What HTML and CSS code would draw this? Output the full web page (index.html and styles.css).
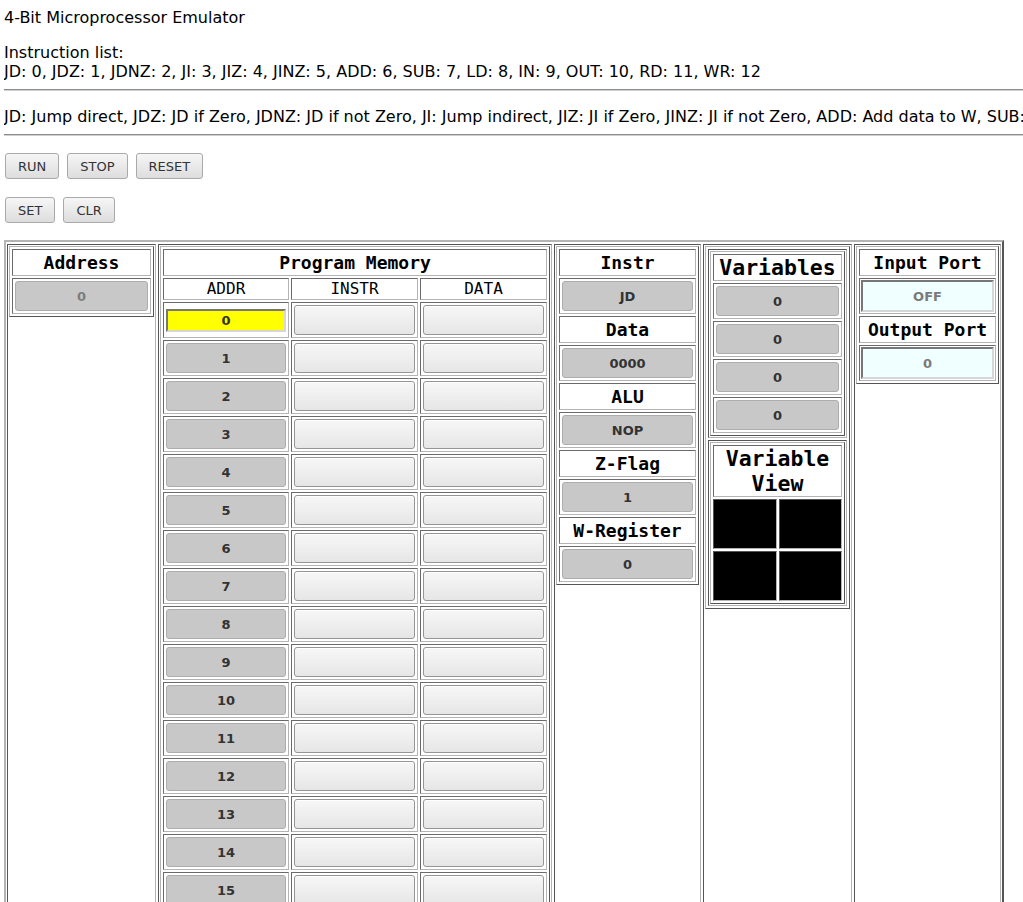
FILE: index.html
```html
<!DOCTYPE html>
<html lang="en">
<head>
<meta charset="utf-8">
<title>4-Bit Microprocessor Emulator</title>
<link rel="stylesheet" href="styles.css">
</head>
<body>
<div class="title">4-Bit Microprocessor Emulator</div>
<div class="list">Instruction list:<br>JD: 0, JDZ: 1, JDNZ: 2, JI: 3, JIZ: 4, JINZ: 5, ADD: 6, SUB: 7, LD: 8, IN: 9, OUT: 10, RD: 11, WR: 12</div>
<hr class="rule">
<div class="desc">JD: Jump direct, JDZ: JD if Zero, JDNZ: JD if not Zero, JI: Jump indirect, JIZ: JI if Zero, JINZ: JI if not Zero, ADD: Add data to W, SUB: Subtract data from W, LD: Load data to W, IN: Input port to W, OUT: W to Output port, RD: Read variable to W, WR: Write W to variable</div>
<hr class="rule">
<div class="controls first">
  <button class="ctl">RUN</button>
  <button class="ctl">STOP</button>
  <button class="ctl">RESET</button>
</div>
<div class="controls second">
  <button class="ctl">SET</button>
  <button class="ctl">CLR</button>
</div>

<div class="frame">
  <div class="col">
    <div class="panel w-addr">
      <div class="hd">Address</div>
      <div class="vc"><button class="vbtn dim">0</button></div>
    </div>
  </div>

  <div class="col">
    <div class="panel w-pm pm">
      <div class="hd span3">Program Memory</div>
      <div class="sh">ADDR</div>
      <div class="sh">INSTR</div>
      <div class="sh">DATA</div>
      <div class="vc mid"><input class="yin" type="text" value="0"></div>
      <div class="vc"><button class="ebtn"></button></div>
      <div class="vc"><button class="ebtn"></button></div>
      <div class="vc"><button class="vbtn">1</button></div><div class="vc"><button class="ebtn"></button></div><div class="vc"><button class="ebtn"></button></div>
      <div class="vc"><button class="vbtn">2</button></div><div class="vc"><button class="ebtn"></button></div><div class="vc"><button class="ebtn"></button></div>
      <div class="vc"><button class="vbtn">3</button></div><div class="vc"><button class="ebtn"></button></div><div class="vc"><button class="ebtn"></button></div>
      <div class="vc"><button class="vbtn">4</button></div><div class="vc"><button class="ebtn"></button></div><div class="vc"><button class="ebtn"></button></div>
      <div class="vc"><button class="vbtn">5</button></div><div class="vc"><button class="ebtn"></button></div><div class="vc"><button class="ebtn"></button></div>
      <div class="vc"><button class="vbtn">6</button></div><div class="vc"><button class="ebtn"></button></div><div class="vc"><button class="ebtn"></button></div>
      <div class="vc"><button class="vbtn">7</button></div><div class="vc"><button class="ebtn"></button></div><div class="vc"><button class="ebtn"></button></div>
      <div class="vc"><button class="vbtn">8</button></div><div class="vc"><button class="ebtn"></button></div><div class="vc"><button class="ebtn"></button></div>
      <div class="vc"><button class="vbtn">9</button></div><div class="vc"><button class="ebtn"></button></div><div class="vc"><button class="ebtn"></button></div>
      <div class="vc"><button class="vbtn">10</button></div><div class="vc"><button class="ebtn"></button></div><div class="vc"><button class="ebtn"></button></div>
      <div class="vc"><button class="vbtn">11</button></div><div class="vc"><button class="ebtn"></button></div><div class="vc"><button class="ebtn"></button></div>
      <div class="vc"><button class="vbtn">12</button></div><div class="vc"><button class="ebtn"></button></div><div class="vc"><button class="ebtn"></button></div>
      <div class="vc"><button class="vbtn">13</button></div><div class="vc"><button class="ebtn"></button></div><div class="vc"><button class="ebtn"></button></div>
      <div class="vc"><button class="vbtn">14</button></div><div class="vc"><button class="ebtn"></button></div><div class="vc"><button class="ebtn"></button></div>
      <div class="vc"><button class="vbtn">15</button></div><div class="vc"><button class="ebtn"></button></div><div class="vc"><button class="ebtn"></button></div>
    </div>
  </div>

  <div class="col">
    <div class="panel w-cpu">
      <div class="hd">Instr</div>
      <div class="vc"><button class="vbtn">JD</button></div>
      <div class="hd">Data</div>
      <div class="vc"><button class="vbtn">0000</button></div>
      <div class="hd">ALU</div>
      <div class="vc"><button class="vbtn">NOP</button></div>
      <div class="hd">Z-Flag</div>
      <div class="vc"><button class="vbtn">1</button></div>
      <div class="hd">W-Register</div>
      <div class="vc"><button class="vbtn">0</button></div>
    </div>
  </div>

  <div class="col">
    <div class="wrap">
      <div class="wcell">
        <div class="panel w-var">
          <div class="hd big">Variables</div>
          <div class="vc"><button class="vbtn">0</button></div>
          <div class="vc"><button class="vbtn">0</button></div>
          <div class="vc"><button class="vbtn">0</button></div>
          <div class="vc"><button class="vbtn">0</button></div>
        </div>
      </div>
      <div class="wcell">
        <div class="panel w-var">
          <div class="hd big">Variable<br>View</div>
          <div class="view">
            <div class="px"></div>
            <div class="px"></div>
            <div class="px"></div>
            <div class="px"></div>
          </div>
        </div>
      </div>
    </div>
  </div>

  <div class="col">
    <div class="panel w-io">
      <div class="hd">Input Port</div>
      <div class="vc tight"><input class="azin" type="text" value="OFF"></div>
      <div class="hd">Output Port</div>
      <div class="vc tight"><input class="azin" type="text" value="0"></div>
    </div>
  </div>
</div>
</body>
</html>
```

FILE: styles.css
```css
body {
  margin: 8px 0 0 4px;
  font-family: "DejaVu Sans", "Liberation Sans", sans-serif;
  font-size: 16px;
  line-height: 19px;
  color: #000;
  background: #fff;
}

.title {
  height: 19px;
}

.list {
  margin-top: 16px;
}

.rule {
  margin: 8px 0;
  border: 0;
  height: 0;
  border-top: 1px solid #8c8c8c;
  border-bottom: 1px solid #d0d0d0;
}

.desc {
  margin-top: 16px;
  white-space: nowrap;
  overflow: hidden;
}

.controls {
  display: flex;
  gap: 8px;
  padding-left: 1px;
  height: 26px;
}

.controls.first {
  margin-top: 17px;
}

.controls.second {
  margin-top: 18px;
}

.ctl {
  height: 26px;
  padding: 0 12px;
  border: 1px solid #a9a9a9;
  border-radius: 3px;
  background: linear-gradient(#f6f6f6, #dddddd);
  font-family: "DejaVu Sans", sans-serif;
  font-size: 13px;
  color: #333;
  margin: 0;
}

/* emulator frame */
.frame {
  margin-top: 17px;
  display: flex;
  align-items: stretch;
  gap: 2px;
  width: fit-content;
  border: 2px solid;
  border-color: #b4b4b4 #555 #555 #b4b4b4;
  padding: 2px 1px 2px 1px;
}

.col {
  border: 1px solid;
  border-color: #555 #b4b4b4 #b4b4b4 #555;
  padding: 1px;
}

.panel,
.wrap {
  border: 1px solid;
  border-color: #b4b4b4 #555 #555 #b4b4b4;
  padding: 2px;
  display: flex;
  flex-direction: column;
  gap: 2px;
}

.wrap {
  align-items: flex-start;
}

.wcell {
  border: 1px solid;
  border-color: #555 #b4b4b4 #b4b4b4 #555;
  padding: 1px;
}

.w-addr { width: 139px; }
.w-pm { width: 384px; }
.w-cpu { width: 137px; }
.w-var { width: 129px; }
.w-io { width: 137px; }

.pm {
  display: grid;
  grid-template-columns: 126px 127px 127px;
  gap: 2px;
}

.span3 {
  grid-column: 1 / 4;
}

.hd {
  border: 1px solid;
  border-color: #6a6a6a #b4b4b4 #b4b4b4 #6a6a6a;
  font-family: "DejaVu Sans Mono", "Liberation Mono", monospace;
  font-weight: bold;
  font-size: 18px;
  line-height: 25px;
  text-align: center;
  background: #fff;
}

.hd.big {
  font-size: 21.5px;
}

.sh {
  border: 1px solid;
  border-color: #6a6a6a #b4b4b4 #b4b4b4 #6a6a6a;
  font-family: "DejaVu Sans Mono", "Liberation Mono", monospace;
  font-size: 16px;
  line-height: 20px;
  text-align: center;
}

.vc {
  border: 1px solid;
  border-color: #6a6a6a #b4b4b4 #b4b4b4 #6a6a6a;
  padding: 2px;
  height: 30px;
  box-sizing: content-box;
}

.vc.mid {
  display: flex;
  align-items: center;
}

.vc.tight {
  padding: 1px;
  height: 32px;
}

.vbtn {
  display: block;
  width: 100%;
  height: 30px;
  margin: 0;
  padding: 0;
  box-sizing: border-box;
  border: 1px solid #adadad;
  border-radius: 3px;
  background: #c8c8c8;
  font-family: "DejaVu Sans", sans-serif;
  font-weight: bold;
  font-size: 13px;
  color: #333;
}

.vbtn.dim {
  color: #7d7d7d;
}

.ebtn {
  display: block;
  width: 100%;
  height: 30px;
  margin: 0;
  padding: 0;
  box-sizing: border-box;
  border: 1px solid #959595;
  border-radius: 3px;
  background: linear-gradient(#f7f7f7, #e6e6e6);
  box-shadow: inset 0 1px 0 #ffffff;
}

.yin {
  display: block;
  width: 100%;
  height: 23px;
  margin: 0;
  padding: 0;
  box-sizing: border-box;
  border: 2px solid;
  border-color: #777 #d6d6d6 #d6d6d6 #777;
  background: #ffff00;
  font-family: "DejaVu Sans", sans-serif;
  font-weight: bold;
  font-size: 13px;
  color: #333;
  text-align: center;
}

.azin {
  display: block;
  width: 100%;
  height: 32px;
  margin: 0;
  padding: 0;
  box-sizing: border-box;
  border: 2px solid;
  border-color: #777 #d6d6d6 #d6d6d6 #777;
  background: #f0ffff;
  font-family: "DejaVu Sans", sans-serif;
  font-weight: bold;
  font-size: 13px;
  color: #7a7a7a;
  text-align: center;
}

.view {
  display: grid;
  grid-template-columns: 64px 63px;
  grid-template-rows: 50px 50px;
  gap: 2px;
}

.px {
  background: #000;
  border: 1px solid;
  border-color: #555 #b4b4b4 #b4b4b4 #555;
}
```
